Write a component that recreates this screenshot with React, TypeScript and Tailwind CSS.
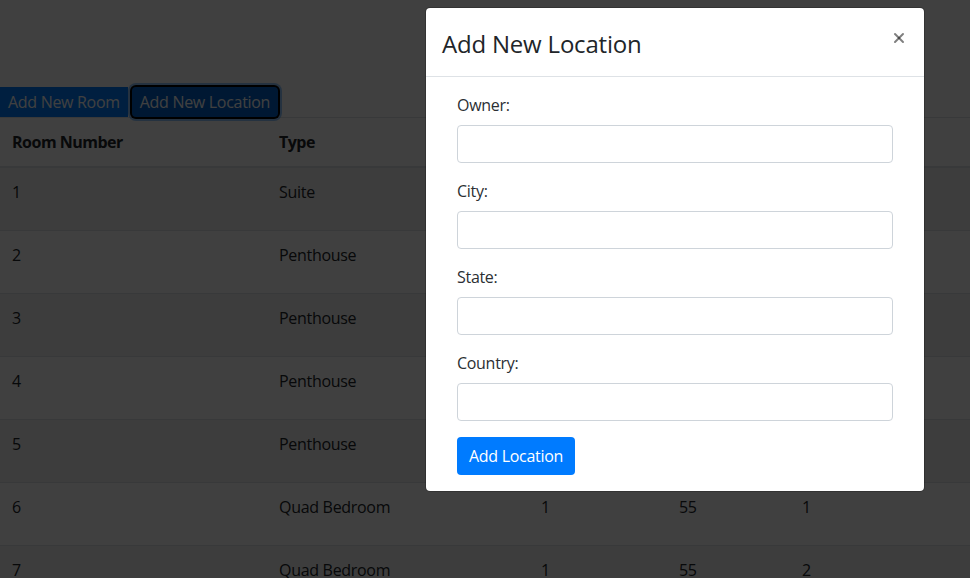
import { X } from "lucide-react";

type Room = { num: number; type: string; floor: number; rate: number; beds: number };

const rooms: Room[] = [
  { num: 1, type: "Suite", floor: 1, rate: 120, beds: 2 },
  { num: 2, type: "Penthouse", floor: 3, rate: 250, beds: 3 },
  { num: 3, type: "Penthouse", floor: 3, rate: 250, beds: 3 },
  { num: 4, type: "Penthouse", floor: 3, rate: 250, beds: 3 },
  { num: 5, type: "Penthouse", floor: 3, rate: 250, beds: 3 },
  { num: 6, type: "Quad Bedroom", floor: 1, rate: 55, beds: 1 },
  { num: 7, type: "Quad Bedroom", floor: 1, rate: 55, beds: 2 },
];

const fields = ["Owner:", "City:", "State:", "Country:"];

function RoomTable() {
  return (
    <table className="w-full border-collapse text-left text-base text-[#212529]">
      <thead>
        <tr>
          <th className="w-[267px] border-t border-b-2 border-[#dee2e6] p-3 font-bold tracking-[-0.5px]">Room Number</th>
          <th className="w-[262px] border-t border-b-2 border-[#dee2e6] p-3 font-bold tracking-[-0.5px]">Type</th>
          <th className="w-[138px] border-t border-b-2 border-[#dee2e6] p-3 font-bold">Floor</th>
          <th className="w-[123px] border-t border-b-2 border-[#dee2e6] p-3 font-bold">Rate</th>
          <th className="border-t border-b-2 border-[#dee2e6] p-3 font-bold">Beds</th>
        </tr>
      </thead>
      <tbody>
        {rooms.map((r, i) => (
          <tr key={r.num} className={i % 2 === 0 ? "bg-black/5" : ""}>
            <td className="h-[63px] border-t border-[#dee2e6] p-3 align-top">{r.num}</td>
            <td className="border-t border-[#dee2e6] p-3 align-top">{r.type}</td>
            <td className="border-t border-[#dee2e6] p-3 align-top">{r.floor}</td>
            <td className="border-t border-[#dee2e6] p-3 align-top">{r.rate}</td>
            <td className="border-t border-[#dee2e6] p-3 align-top">{r.beds}</td>
          </tr>
        ))}
      </tbody>
    </table>
  );
}

function LocationModal() {
  return (
    <div className="absolute left-[425px] top-[7px] w-[500px] rounded-[5px] border border-black/20 bg-white bg-clip-padding text-[#212529]">
      <div className="flex items-start justify-between border-b border-[#dee2e6] px-4 pt-[18px] pb-[14px]">
        <h4 className="text-2xl leading-9 font-medium tracking-[-0.2px]">Add New Location</h4>
        <button className="-mr-[3px] -mt-[2px] flex h-[28px] w-6 items-center justify-center text-black/50">
          <X size={16} strokeWidth={3} />
        </button>
      </div>
      <form className="px-[31px] pt-4 pb-4">
        {fields.map((f) => (
          <div key={f} className="mb-4">
            <label className="mb-2 block leading-6 text-[#2b2f33]">{f}</label>
            <input className="block h-[38px] w-full rounded border border-[#ced4da] px-3" />
          </div>
        ))}
        <button
          type="button"
          className="h-[38px] rounded bg-[#007bff] px-3 leading-6 text-white"
        >
          Add Location
        </button>
      </form>
    </div>
  );
}

export default function App() {
  return (
    <div className="relative h-[578px] w-[970px] overflow-hidden bg-white font-['Segoe_UI','Open_Sans',sans-serif] text-base leading-6 tracking-[-0.3px]">
      <div className="pt-[87px]">
        <div className="flex items-center gap-1">
          <button className="h-[30px] bg-[#007bff] px-2 text-white">Add New Room</button>
          <button className="h-[30px] rounded-[4px] bg-[#0062cc] px-2 text-white ring-2 ring-black shadow-[0_0_0_4px_rgba(38,143,255,0.5)]">
            Add New Location
          </button>
        </div>
        <RoomTable />
      </div>
      <div className="absolute inset-0 bg-black/75" />
      <LocationModal />
    </div>
  );
}
